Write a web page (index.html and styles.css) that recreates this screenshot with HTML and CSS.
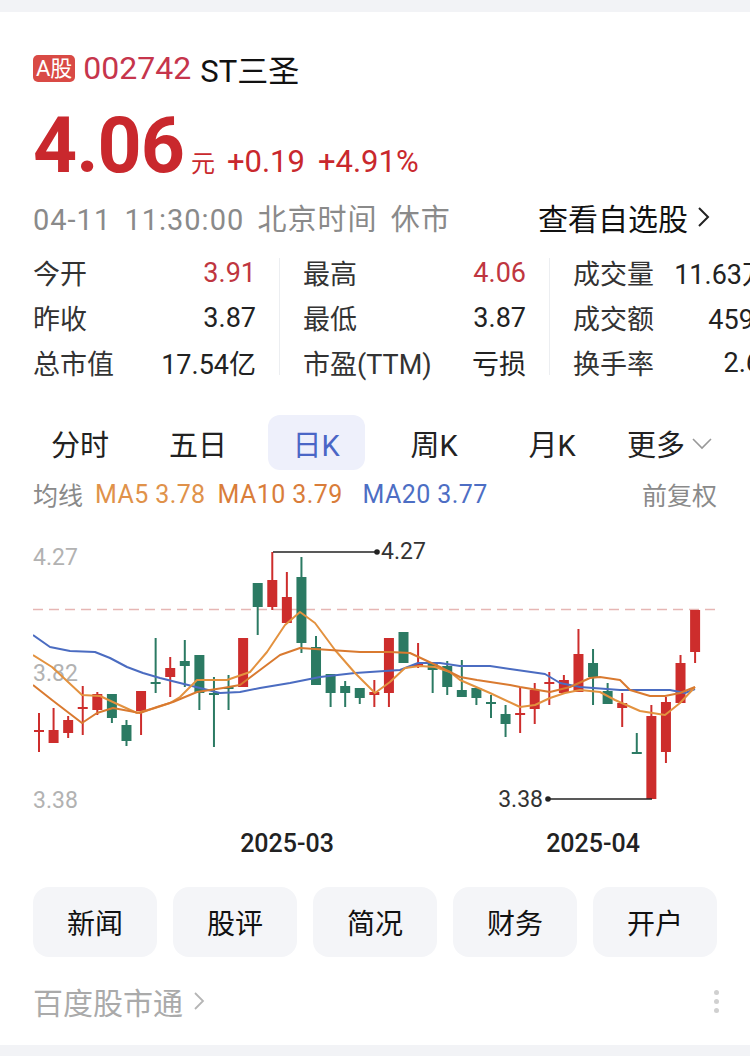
FILE: index.html
```html
<!DOCTYPE html>
<html lang="zh-CN">
<head>
    <meta charset="UTF-8">
    <meta name="viewport" content="width=device-width, initial-scale=1.0">
    <title>ST三圣 002742 - 百度股市通</title>
    <link rel="stylesheet" href="styles.css">
</head>
<body>
    <div class="gap-bar"></div>

    <main class="card">
        <div class="title-row">
            <span class="badge">A股</span>
            <span class="code">002742</span>
            <span class="name">ST三圣</span>
        </div>

        <div class="price-row">
            <span class="price">4.06</span>
            <span class="unit">元</span>
            <span class="change">+0.19</span>
            <span class="change">+4.91%</span>
        </div>

        <div class="time-row">
            <span class="time">04-11 11:30:00 北京时间 休市</span>
            <a class="watch">查看自选股
                <svg width="14" height="22" viewBox="0 0 14 22"><polyline points="3,2 12,11 3,20" fill="none" stroke="#222" stroke-width="2"/></svg>
            </a>
        </div>

        <div class="stats">
            <div class="stat-col">
                <div class="stat"><span>今开</span><span class="up">3.91</span></div>
                <div class="stat"><span>昨收</span><span>3.87</span></div>
                <div class="stat"><span>总市值</span><span>17.54亿</span></div>
            </div>
            <div class="stat-divider"></div>
            <div class="stat-col">
                <div class="stat"><span>最高</span><span class="up">4.06</span></div>
                <div class="stat"><span>最低</span><span>3.87</span></div>
                <div class="stat"><span>市盈(TTM)</span><span>亏损</span></div>
            </div>
            <div class="stat-divider"></div>
            <div class="stat-col">
                <div class="stat"><span>成交量</span><span>11.63万手</span></div>
                <div class="stat"><span>成交额</span><span>4594万</span></div>
                <div class="stat"><span>换手率</span><span>2.69%</span></div>
            </div>
        </div>

        <div class="tabs">
            <div class="tab"><span>分时</span></div>
            <div class="tab"><span>五日</span></div>
            <div class="tab active"><span>日K</span></div>
            <div class="tab"><span>周K</span></div>
            <div class="tab"><span>月K</span></div>
            <div class="tab"><span>更多
                <svg width="22" height="14" viewBox="0 0 22 14"><polyline points="2,3 11,12 20,3" fill="none" stroke="#999" stroke-width="1.6"/></svg>
            </span></div>
        </div>

        <div class="legend">
            <span class="muted">均线</span>
            <span class="ma5">MA5 3.78</span>
            <span class="ma10">MA10 3.79</span>
            <span class="ma20">MA20 3.77</span>
            <span class="muted right">前复权</span>
        </div>

        <svg class="chart" width="684" height="350" viewBox="33 520 684 350">
            <line x1="33" y1="609.5" x2="716" y2="609.5" stroke="#e6b6b4" stroke-width="1.6" stroke-dasharray="10 6"/>
            <text class="axis" x="33" y="565">4.27</text>
            <text class="axis" x="33" y="681">3.82</text>
            <text class="axis" x="33" y="808">3.38</text>
            <g id="candles"></g>
            <polyline class="ma-line" stroke="#4b6cc1" points="33,635 50,647 70,651 95,652 110,658 127,667 143,673 160,678 180,683 200,688 220,693 240,692 260,688 290,683 320,677 355,673 400,670 418,663 440,663 460,666 490,666 510,669 545,674 560,683 580,687 620,690 670,690 685,693 695,689"/>
            <polyline class="ma-line" stroke="#e3923f" points="33,655 52,667 82,695 100,696 115,703 137,713 155,708 170,703 180,697 197,680 227,680 250,672 267,652 285,625 300,612 315,623 335,650 355,673 375,693 390,682 405,668 420,666 435,667 450,672 460,680 490,693 520,707 535,705 550,698 565,693 580,690 600,692 615,700 640,711 665,715 680,703 695,687"/>
            <polyline class="ma-line" stroke="#d97a30" points="33,685 52,700 82,723 97,713 113,708 140,713 157,707 173,702 197,692 223,688 240,685 260,670 280,655 300,648 330,650 360,652 390,652 410,653 425,660 440,667 460,677 477,680 510,685 520,687 550,692 570,687 590,678 600,677 620,680 630,690 650,696 665,696 680,693 695,687"/>

            <polyline points="273,552 377,552" fill="none" stroke="#222" stroke-width="1.6"/>
            <circle cx="377" cy="552" r="2.8" fill="#222"/>
            <text class="mark" x="381" y="559">4.27</text>
            <polyline points="548,799 652,799" fill="none" stroke="#222" stroke-width="1.6"/>
            <circle cx="548" cy="799" r="2.8" fill="#222"/>
            <text class="mark" x="543" y="807" text-anchor="end">3.38</text>

            <text class="date" x="287" y="852" text-anchor="middle">2025-03</text>
            <text class="date" x="593" y="852" text-anchor="middle">2025-04</text>
        </svg>

        <div class="actions">
            <div class="action">新闻</div>
            <div class="action">股评</div>
            <div class="action">简况</div>
            <div class="action">财务</div>
            <div class="action">开户</div>
        </div>

        <div class="footer">
            <span class="source">百度股市通
                <svg width="12" height="20" viewBox="0 0 12 20"><polyline points="2,2 10,10 2,18" fill="none" stroke="#b5b5b5" stroke-width="1.8"/></svg>
            </span>
            <span class="more-dots"><i></i><i></i><i></i></span>
        </div>
    </main>

    <div class="gap-bar"></div>

    <script>
        // daily candles, y in page pixels: [bodyTop, bodyBottom, wickTop, wickBottom, rising]
        const candles = [
            [730, 732, 713, 752, 1], [730, 743, 708, 743, 1], [720, 733, 716, 738, 1],
            [707, 709, 686, 735, 1], [694, 710, 692, 715, 1], [694, 718, 694, 723, 0],
            [725, 741, 720, 746, 0], [691, 711, 691, 735, 1], [682, 684, 638, 693, 0],
            [668, 677, 657, 697, 1], [661, 666, 640, 687, 0], [655, 693, 655, 710, 0],
            [693, 695, 677, 747, 0], [687, 689, 675, 710, 0], [638, 687, 638, 687, 1],
            [583, 607, 583, 635, 0], [580, 607, 552, 610, 1], [597, 623, 572, 623, 1],
            [577, 643, 557, 653, 0], [647, 685, 636, 685, 0], [674, 693, 674, 707, 0],
            [686, 693, 681, 707, 0], [688, 698, 688, 704, 0], [692, 695, 680, 707, 1],
            [638, 693, 638, 707, 1], [632, 663, 632, 663, 0], [664, 666, 643, 668, 1],
            [662, 670, 662, 693, 0], [666, 687, 661, 695, 0], [690, 697, 660, 697, 0],
            [688, 698, 688, 705, 0], [702, 704, 695, 718, 0], [714, 724, 705, 737, 0],
            [713, 715, 687, 733, 1], [690, 709, 683, 724, 1], [682, 684, 672, 705, 1],
            [680, 693, 675, 693, 1], [654, 692, 629, 692, 1], [663, 677, 649, 705, 0],
            [691, 704, 683, 704, 0], [703, 708, 693, 727, 1], [752, 754, 733, 754, 0],
            [716, 799, 705, 799, 1], [702, 752, 697, 763, 1], [663, 703, 655, 703, 1],
            [610, 652, 610, 663, 1]
        ];

        const group = document.getElementById('candles');
        let svgHTML = '';
        candles.forEach(function (c, i) {
            const x = 39 + i * 14.58;
            const color = c[4] ? '#cd2d2c' : '#2b7a63';
            svgHTML += `<line x1="${x}" y1="${c[2]}" x2="${x}" y2="${c[3]}" stroke="${color}" stroke-width="2"/>`;
            svgHTML += `<rect x="${x - 5}" y="${c[0]}" width="10" height="${c[1] - c[0]}" fill="${color}"/>`;
        });
        group.innerHTML = svgHTML;
    </script>
</body>
</html>
```

FILE: styles.css
```css
:root {
    --red: #c9282d;
    --code-red: #c6354c;
    --green: #2b7a63;
    --text: #222;
    --muted: #8a8a8a;
    --light-bg: #f4f5f8;
    --blue: #4a66c6;
}

* {
    box-sizing: border-box;
}

body {
    margin: 0;
    width: 750px;
    height: 1056px;
    overflow: hidden;
    background: #fff;
    color: var(--text);
    font-family: Roboto, "Noto Sans CJK SC", sans-serif;
}

.gap-bar {
    height: 12px;
    background: #f2f3f6;
}

.card {
    padding: 41px 33px 24px;
}

.title-row {
    display: flex;
    align-items: center;
    height: 30px;
}

.badge {
    background: #d94a45;
    color: #fff;
    font-size: 22px;
    line-height: 27px;
    height: 27px;
    padding: 0 3px;
    border-radius: 5px;
    margin-right: 8px;
}

.code {
    color: var(--code-red);
    font-size: 32px;
    margin-right: 9px;
}

.name {
    font-size: 31px;
    color: #111;
}

.price-row {
    display: flex;
    align-items: baseline;
    height: 80px;
    line-height: 80px;
    margin-top: 23px;
    color: var(--red);
}

.price {
    font-size: 77px;
    font-weight: 700;
    letter-spacing: -1px;
    margin-right: 7px;
}

.unit {
    font-size: 24px;
    margin-right: 12px;
}

.change {
    font-size: 31px;
    margin-right: 13px;
}

.time-row {
    display: flex;
    align-items: center;
    justify-content: space-between;
    height: 40px;
    margin-top: 11px;
}

.time {
    color: var(--muted);
    font-size: 29px;
    letter-spacing: 1px;
    word-spacing: 5px;
}

.watch {
    display: flex;
    align-items: center;
    gap: 8px;
    font-size: 30px;
    color: #111;
    margin-right: 7px;
}

.stats {
    display: grid;
    grid-template-columns: 223px 1px 223px 1px 223px;
    column-gap: 23px;
    margin-top: 13px;
    width: 760px;
}

.stat {
    display: flex;
    justify-content: space-between;
    align-items: center;
    height: 45px;
    font-size: 27px;
    white-space: nowrap;
}

.stat span:first-child {
    color: #333;
}

.stat .up {
    color: #bf3640;
}

.stat-divider {
    background: #eceef1;
    margin: 8px 0 10px;
}

.tabs {
    display: grid;
    grid-template-columns: repeat(6, 118px);
    margin: 30px 0 0 -12px;
    height: 55px;
}

.tab {
    display: flex;
    justify-content: center;
}

.tab span {
    display: flex;
    align-items: center;
    justify-content: center;
    gap: 6px;
    width: 97px;
    height: 55px;
    border-radius: 12px;
    font-size: 29px;
    white-space: nowrap;
}

.tab.active span {
    background: #eef0fb;
    color: var(--blue);
}

.legend {
    display: flex;
    align-items: center;
    gap: 12px;
    height: 30px;
    margin-top: 9px;
    font-size: 25px;
}

.legend .muted {
    color: var(--muted);
}

.legend .right {
    margin-left: auto;
}

.ma5 {
    color: #e0924a;
    letter-spacing: 0.4px;
}

.ma10 {
    color: #d97d3a;
    letter-spacing: 0.4px;
}

.ma20 {
    color: #4d6ec4;
    letter-spacing: 0.4px;
    margin-left: 8px;
}

.chart {
    display: block;
    margin-top: 11px;
}

.chart .axis {
    fill: #b2b2b2;
    font-size: 23px;
}

.chart .mark {
    fill: #333;
    font-size: 23px;
}

.chart .date {
    fill: #222;
    font-size: 25px;
    font-weight: 500;
}

.ma-line {
    fill: none;
    stroke-width: 2;
    stroke-linejoin: round;
}

.actions {
    display: grid;
    grid-template-columns: repeat(5, 1fr);
    gap: 16px;
    margin-top: 17px;
}

.action {
    height: 70px;
    border-radius: 16px;
    background: var(--light-bg);
    display: flex;
    align-items: center;
    justify-content: center;
    font-size: 28px;
    color: #111;
}

.footer {
    display: flex;
    align-items: center;
    justify-content: space-between;
    height: 40px;
    margin-top: 24px;
}

.source {
    display: flex;
    align-items: center;
    gap: 10px;
    color: #aaa;
    font-size: 30px;
}

.more-dots {
    display: flex;
    flex-direction: column;
    gap: 4px;
    margin-right: -2px;
}

.more-dots i {
    width: 5px;
    height: 5px;
    border-radius: 50%;
    background: #d0d0d0;
}
```
